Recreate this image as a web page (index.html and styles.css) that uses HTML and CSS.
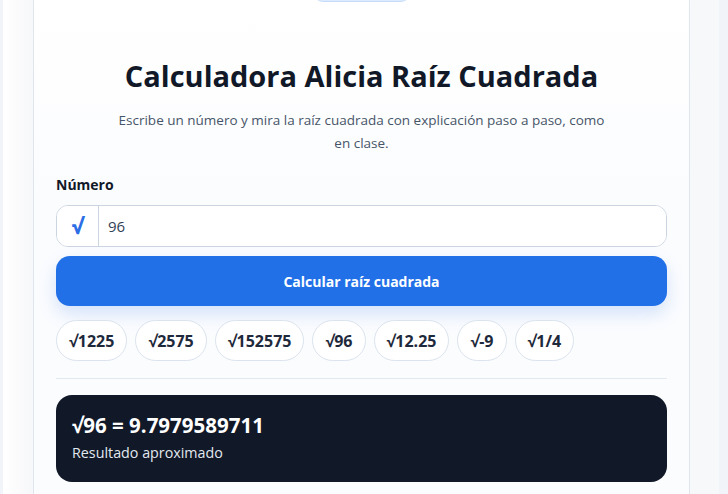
FILE: index.html
```html
<!DOCTYPE html>
<html lang="es">
<head>
<meta charset="utf-8">
<title>Calculadora Alicia Raíz Cuadrada</title>
<link rel="stylesheet" href="styles.css">
</head>
<body>
<div class="shell">
  <main class="card">
    <div class="badge"></div>
    <h1 class="title">Calculadora Alicia Raíz Cuadrada</h1>
    <p class="lead">Escribe un número y mira la raíz cuadrada con explicación paso a paso, como en clase.</p>
    <label class="label" for="num">Número</label>
    <div class="field">
      <span class="addon">√</span>
      <input id="num" class="input" type="text" value="96">
    </div>
    <button class="calc">Calcular raíz cuadrada</button>
    <div class="chips">
      <button class="chip">√1225</button>
      <button class="chip">√2575</button>
      <button class="chip">√152575</button>
      <button class="chip">√96</button>
      <button class="chip">√12.25</button>
      <button class="chip">√-9</button>
      <button class="chip">√1/4</button>
    </div>
    <hr class="divider">
    <section class="result">
      <div class="result-main">√96 = 9.7979589711</div>
      <div class="result-sub">Resultado aproximado</div>
    </section>
    <section class="next"></section>
  </main>
</div>
</body>
</html>
```
FILE: styles.css
```css
* { box-sizing: border-box; }
html, body { margin: 0; height: 100%; }
body {
  background: #f1f5f9;
  font-family: "Open Sans", "Noto Sans", sans-serif;
  color: #0f172a;
  overflow: hidden;
}
.shell {
  margin: 0 9px 0 3px;
  height: 494px;
  padding: 0 29px 0 30px;
  background: linear-gradient(90deg, #ffffff 0%, #f7f8fa 4%, #f7f8fa 100%);
}
.card {
  height: 100%;
  overflow: hidden;
  background: linear-gradient(180deg, #ffffff 0%, #fbfcfe 40%, #fbfcfe 100%);
  border-left: 1px solid #e0e6ef;
  border-right: 1px solid #e0e6ef;
  padding: 0 22px;
  display: flex;
  flex-direction: column;
}
.card > * { flex-shrink: 0; }
.badge {
  align-self: center;
  width: 100px;
  height: 16px;
  margin-top: -14px;
  border-radius: 0 0 12px 12px;
  background: #dbeafe;
  border-bottom: 1px solid #c7dcfa;
}
.title {
  margin: 55px 0 0;
  text-align: center;
  font-size: 29px;
  font-weight: 700;
  line-height: 38px;
  color: #111827;
}
.lead {
  margin: 14px auto 0;
  max-width: 500px;
  text-align: center;
  font-size: 13.5px;
  line-height: 23px;
  color: #475569;
}
.label {
  margin-top: 20px;
  font-size: 14px;
  font-weight: 700;
  color: #111827;
  line-height: 20px;
}
.field {
  margin-top: 10px;
  display: flex;
  height: 42px;
  border: 1px solid #cbd5e1;
  border-radius: 12px;
  background: #fff;
  overflow: hidden;
}
.addon {
  width: 42px;
  display: flex;
  align-items: center;
  justify-content: center;
  border-right: 1px solid #cbd5e1;
  color: #2b6ee6;
  font-weight: 800;
  font-size: 21px;
  background: #fff;
}
.input {
  flex: 1;
  border: 0;
  outline: 0;
  padding: 0 9px;
  font-family: inherit;
  font-size: 15px;
  color: #334155;
  background: #fff;
}
.calc {
  margin-top: 9px;
  height: 50px;
  border: 0;
  border-radius: 14px;
  background: #2170e8;
  color: #fff;
  font-family: inherit;
  font-weight: 700;
  font-size: 14px;
  box-shadow: 0 8px 18px rgba(37, 112, 232, 0.18);
}
.chips {
  margin-top: 14px;
  display: flex;
  flex-wrap: wrap;
  gap: 8px;
}
.chip {
  height: 41px;
  padding: 0 12px;
  border: 1px solid #dbe3ee;
  border-radius: 21px;
  background: #fff;
  font-family: inherit;
  font-weight: 700;
  font-size: 16px;
  color: #1e293b;
}
.divider {
  margin: 17px 0 0;
  border: 0;
  border-top: 1px solid #e2e8f0;
}
.result {
  margin-top: 16px;
  height: 87px;
  border-radius: 16px;
  background: #111827;
  padding: 15px 16px 0;
  color: #fff;
}
.result-main {
  font-size: 20.5px;
  font-weight: 700;
  line-height: 30px;
}
.result-sub {
  margin-top: 3px;
  font-size: 14.3px;
  color: #e2e8f0;
  line-height: 20px;
}
.next {
  margin-top: 12px;
  height: 40px;
  border: 1px solid #e2e8f0;
  border-radius: 14px;
  background: #fff;
}
```
